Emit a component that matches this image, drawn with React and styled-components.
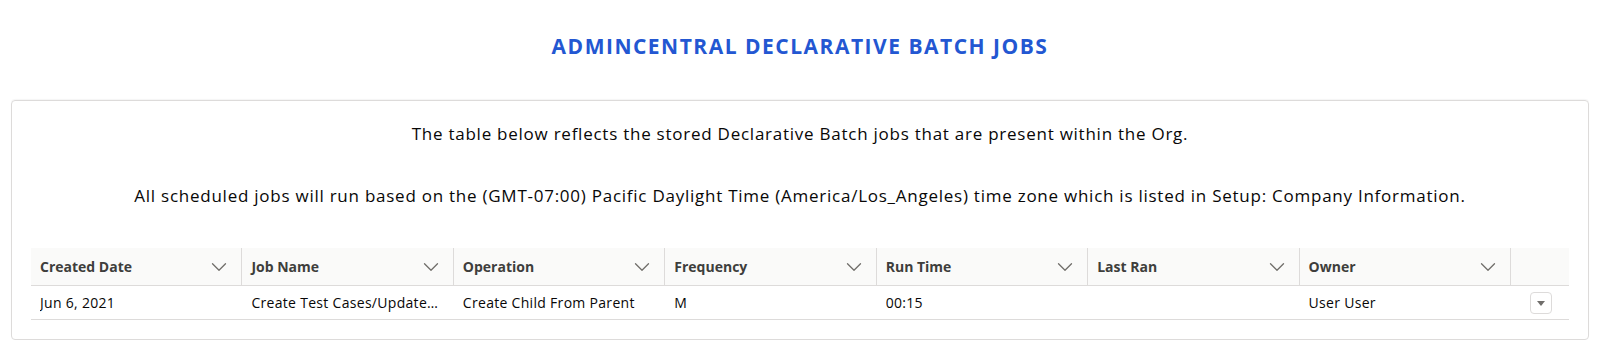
import React from "react";
import styled, { createGlobalStyle } from "styled-components";
import { ChevronDown } from "lucide-react";

const GlobalStyle = createGlobalStyle`
  body {
    margin: 0;
    background: #ffffff;
    font-family: "Open Sans", "Noto Sans", sans-serif;
    color: #080707;
  }
`;

const Page = styled.div`
  width: 1600px;
  height: 360px;
  box-sizing: border-box;
  padding: 34px 11px 0;
`;

const Title = styled.h1`
  margin: 0;
  height: 24px;
  line-height: 24px;
  text-align: center;
  font-size: 21px;
  font-weight: 700;
  letter-spacing: 1.5px;
  color: #2357d2;
`;

const Card = styled.div`
  margin-top: 42px;
  border: 1px solid #dddbda;
  border-radius: 4px;
  box-shadow: 0 -1px 1px rgba(0, 0, 0, 0.04);
  padding: 23px 19px 19px;
  display: flex;
  flex-direction: column;
  gap: 42px;
`;

const Note = styled.p`
  margin: 0;
  text-align: center;
  font-size: 17px;
  line-height: 20px;
  letter-spacing: 0.75px;
  color: #080707;
`;

const Table = styled.div`
  display: grid;
  grid-template-columns: repeat(7, 1fr) 58px;
  font-size: 14px;
`;

const HeadCell = styled.div`
  height: 37px;
  background: #fafaf9;
  border-bottom: 1px solid #dddbda;
  border-right: ${(p) => (p.$last ? "none" : "1px solid #dddbda")};
  display: flex;
  align-items: center;
  justify-content: space-between;
  padding: 0 9px 0 9px;
  font-weight: 700;
  color: #3e3e3c;
`;

const Cell = styled.div`
  height: 33px;
  border-bottom: 1px solid #dddbda;
  display: flex;
  align-items: center;
  justify-content: ${(p) => (p.$center ? "center" : "flex-start")};
  padding: 0 9px;
  color: #080707;
  letter-spacing: 0.3px;
  white-space: nowrap;
  overflow: hidden;
  min-width: 0;
`;

const CellText = styled.span`
  overflow: hidden;
  text-overflow: ellipsis;
`;

const MenuButton = styled.button`
  width: 22px;
  height: 22px;
  padding: 0;
  border: 1px solid #dddbda;
  border-radius: 4px;
  background: #ffffff;
  display: flex;
  align-items: center;
  justify-content: center;
  margin-left: 2px;
`;

const Triangle = styled.span`
  width: 0;
  height: 0;
  border-left: 4px solid transparent;
  border-right: 4px solid transparent;
  border-top: 5px solid #706e6b;
  margin-top: 1px;
`;

const columns = [
  "Created Date",
  "Job Name",
  "Operation",
  "Frequency",
  "Run Time",
  "Last Ran",
  "Owner",
];

const row = [
  "Jun 6, 2021",
  "Create Test Cases/Update…",
  "Create Child From Parent",
  "M",
  "00:15",
  "",
  "User User",
];

export default function App() {
  return (
    <Page>
      <GlobalStyle />
      <Title>ADMINCENTRAL DECLARATIVE BATCH JOBS</Title>
      <Card>
        <Note>
          The table below reflects the stored Declarative Batch jobs that are
          present within the Org.
        </Note>
        <Note>
          All scheduled jobs will run based on the (GMT-07:00) Pacific Daylight
          Time (America/Los_Angeles) time zone which is listed in Setup: Company
          Information.
        </Note>
        <Table>
          {columns.map((c) => (
            <HeadCell key={c}>
              <span>{c}</span>
              <ChevronDown size={26} strokeWidth={1.2} color="#706e6b" />
            </HeadCell>
          ))}
          <HeadCell $last />
          {row.map((v, i) => (
            <Cell key={i}>
              <CellText>{v}</CellText>
            </Cell>
          ))}
          <Cell $center>
            <MenuButton>
              <Triangle />
            </MenuButton>
          </Cell>
        </Table>
      </Card>
    </Page>
  );
}
